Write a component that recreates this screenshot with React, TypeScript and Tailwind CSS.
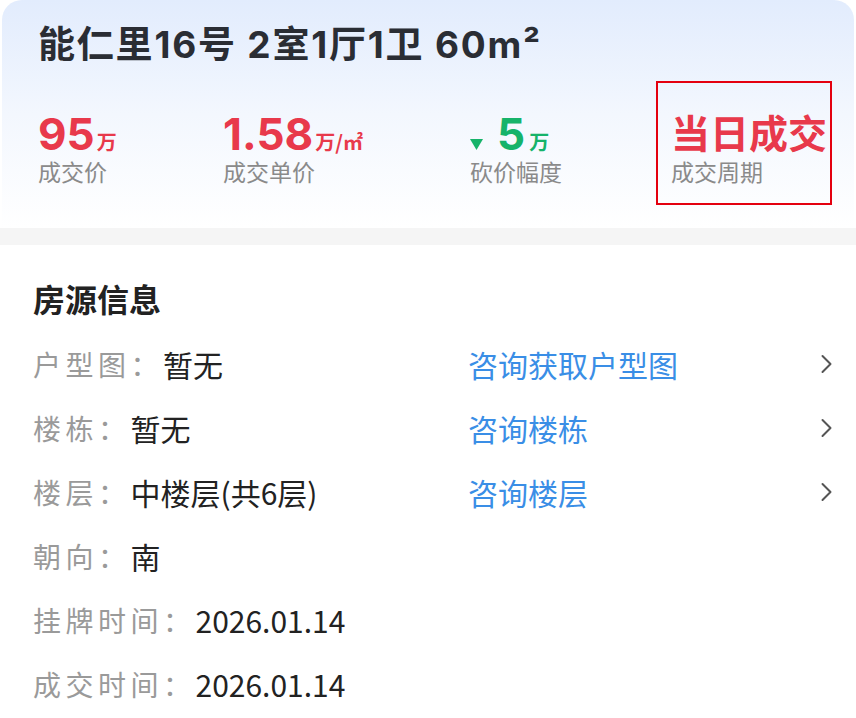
const cjk = { fontFamily: '"Noto Sans CJK SC", "Noto Sans", sans-serif' };
const num = { fontFamily: 'Inter, "Noto Sans CJK SC", sans-serif' };

type Row = { label: string; value: string; link?: string };

const rows: Row[] = [
  { label: "户型图：", value: "暂无", link: "咨询获取户型图" },
  { label: "楼栋：", value: "暂无", link: "咨询楼栋" },
  { label: "楼层：", value: "中楼层(共6层)", link: "咨询楼层" },
  { label: "朝向：", value: "南" },
  { label: "挂牌时间：", value: "2026.01.14" },
  { label: "成交时间：", value: "2026.01.14" },
];

export default function App() {
  return (
    <div className="min-h-[718px] w-[856px] overflow-hidden bg-white" style={cjk}>
      <Header />
      <div className="h-[17px] bg-[#f5f5f5]" />
      <section className="pt-[31px] pr-[24px] pl-[33px]">
        <h2 className="text-[32px] leading-[44px] font-bold text-[#222]">房源信息</h2>
        <div className="mt-[12px]">
          {rows.map((r) => (
            <InfoRow key={r.label} row={r} />
          ))}
        </div>
      </section>
    </div>
  );
}

function Header() {
  return (
    <div className="mx-[2px] h-[228px] rounded-t-[20px] bg-gradient-to-b from-[#e2ecfd] via-[#f3f7fe] to-white pt-[22px] pr-[16px] pl-[36px]">
      <h1 className="text-[37px] leading-[46px] font-bold tracking-[1.8px] text-[#2a2d34]" style={num}>
        能仁里16号 2室1厅1卫 60m²
      </h1>
      <div className="mt-[44px] flex">
        <Stat className="w-[185px]" label="成交价">
          <span className="text-[44px] leading-none font-bold text-[#e8394b]" style={num}>95</span>
          <span className="ml-[2px] text-[20px] leading-none font-bold text-[#e8394b]">万</span>
        </Stat>
        <Stat className="w-[247px]" label="成交单价">
          <span className="text-[44px] leading-none font-bold text-[#e8394b]" style={num}>1.58</span>
          <span className="ml-[2px] text-[20px] leading-none font-bold text-[#e8394b]">万/㎡</span>
        </Stat>
        <Stat className="w-[201px]" label="砍价幅度">
          <svg width="13" height="11" viewBox="0 0 13 11" className="mr-[14px] mb-[6px] self-end">
            <path d="M0 0 H13 L6.5 11 Z" fill="#16b36a" />
          </svg>
          <span className="text-[44px] leading-none font-bold text-[#16b36a]" style={num}>5</span>
          <span className="ml-[4px] text-[20px] leading-none font-bold text-[#16b36a]">万</span>
        </Stat>
        <div className="relative shrink-0">
          <div className="absolute top-[-31px] left-[-15px] h-[124px] w-[176px] border-2 border-[#e4000f]" />
          <div className="flex h-[44px] items-end pb-[5px]">
            <span className="text-[39px] leading-none font-bold whitespace-nowrap text-[#e8394b]">当日成交</span>
          </div>
          <div className="text-[23px] leading-[30px] whitespace-nowrap text-[#8a8a8a]">成交周期</div>
        </div>
      </div>
    </div>
  );
}

function Stat({ className, label, children }: { className: string; label: string; children: React.ReactNode }) {
  return (
    <div className={`shrink-0 ${className}`}>
      <div className="flex h-[44px] items-end">
        <div className="flex items-baseline">{children}</div>
      </div>
      <div className="text-[23px] leading-[30px] text-[#8a8a8a]">{label}</div>
    </div>
  );
}

function InfoRow({ row }: { row: Row }) {
  return (
    <div className="flex h-[64px] items-center">
      <div className="flex w-[435px] items-center">
        <span className="text-[28px] tracking-[4.5px] text-[#9a9a9a]">{row.label}</span>
        <span className="text-[30px] text-[#222]">{row.value}</span>
      </div>
      {row.link && (
        <>
          <span className="flex-1 text-[30px] text-[#3a8ee6]">{row.link}</span>
          <svg width="11" height="20" viewBox="0 0 11 20" fill="none">
            <path d="M1.5 2 L9.5 10 L1.5 18" stroke="#555" strokeWidth="2" strokeLinecap="round" strokeLinejoin="round" />
          </svg>
        </>
      )}
    </div>
  );
}
